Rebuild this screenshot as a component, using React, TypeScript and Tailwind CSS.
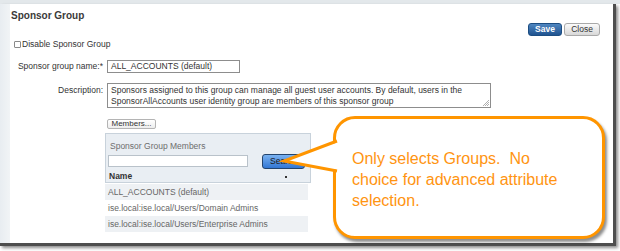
import React from 'react';

const rows = [
  'ALL_ACCOUNTS (default)',
  'ise.local:ise.local/Users/Domain Admins',
  'ise.local:ise.local/Users/Enterprise Admins',
];

const App: React.FC = () => {
  return (
    <div className="relative w-[620px] h-[251px] bg-white overflow-hidden font-['Liberation_Sans',Arial,sans-serif] text-[8.5px] text-[#333]">
      {/* top strip */}
      <div className="h-[4px] bg-[#e3e8eb]" />

      {/* window */}
      <div className="flex w-[616px] h-[242px] border-r-[3px] border-b-[3px] border-[#4e4e4e] shadow-[2px_2px_3px_rgba(0,0,0,0.45)]">
        <div className="w-[10px] bg-gradient-to-r from-[#e8edf1] to-[#f1f4f6]" />

        <div className="flex-1 flex flex-col pt-[6px] pr-[13px]">
          {/* header */}
          <div className="flex justify-between items-start">
            <div className="pl-[1px] text-[10px] leading-[12px] font-bold text-[#3a3a3a]">Sponsor Group</div>
            <div className="mt-[13px] flex gap-[2px]">
              <button className="w-[34px] h-[13px] rounded-[3px] border border-[#1c4d82] bg-gradient-to-b from-[#4f86c0] to-[#1f5390] text-white font-bold text-[8.5px] leading-[11px]">
                Save
              </button>
              <button className="w-[36px] h-[13px] rounded-[3px] border border-[#a9a9a9] bg-gradient-to-b from-[#fbfbfb] to-[#d8d8d8] text-[#333] text-[8.5px] leading-[11px]">
                Close
              </button>
            </div>
          </div>

          {/* checkbox */}
          <div className="mt-[4px] h-[9px] flex items-center pl-[4px]">
            <span className="w-[7px] h-[7px] border border-[#8a8a8a] rounded-[1px] bg-white" />
            <span className="ml-[1px] leading-[9px]">Disable Sponsor Group</span>
          </div>

          {/* name */}
          <div className="mt-[11px] flex items-center">
            <div className="w-[93px] text-right whitespace-nowrap">Sponsor group name:*</div>
            <div className="ml-[4px] w-[133px] h-[13px] border border-[#8d8d8d] bg-white pl-[3px] leading-[11px] whitespace-nowrap">
              ALL_ACCOUNTS (default)
            </div>
          </div>

          {/* description */}
          <div className="mt-[10px] flex items-start">
            <div className="w-[93px] text-right pt-[2px] leading-[10px]">Description:</div>
            <div className="relative ml-[4px] w-[384px] h-[25px] border border-[#8d8d8d] bg-white pl-[3px] pt-[1px] leading-[11px] whitespace-nowrap">
              <div>Sponsors assigned to this group can manage all guest user accounts. By default, users in the</div>
              <div>SponsorAllAccounts user identity group are members of this sponsor group</div>
              <svg className="absolute right-[1px] bottom-[1px]" width="6" height="6" viewBox="0 0 6 6">
                <path d="M0 6L6 0M2 6L6 2M4 6L6 4" stroke="#9a9a9a" strokeWidth="0.8" />
              </svg>
            </div>
          </div>

          {/* members button */}
          <div className="mt-[9px] ml-[97px]">
            <button className="w-[49px] h-[10px] rounded-[2px] border border-[#b4b4b4] bg-gradient-to-b from-white to-[#ededed] text-[8px] leading-[8px] text-[#333]">
              Members...
            </button>
          </div>

          {/* members panel */}
          <div className="mt-[3px] ml-[95px] w-[206px] h-[50px] border border-[#c8d2db] bg-[#e9eef3] pt-[7px] pl-[2px]">
            <div className="leading-[10px] text-[#6d6d6d] pl-[2px]">Sponsor Group Members</div>
            <div className="mt-[3px] h-[15px] flex items-center">
              <div className="w-[140px] h-[12px] border border-[#b9c2ca] bg-white" />
              <button className="ml-[14px] w-[43px] h-[15px] rounded-[3px] border border-[#24456e] bg-gradient-to-b from-[#79b1f0] to-[#3277d4] text-[#1a1a1a] text-[8.5px] leading-[13px]">
                Search
              </button>
            </div>
            <div className="mt-[1px] h-[12px] flex items-center pl-[1px] pr-[23px] justify-between">
              <span className="leading-[12px] font-semibold text-[#333]">Name</span>
              <span className="w-[2px] h-[2px] mt-[3px] bg-[#333]" />
            </div>
          </div>

          {/* rows */}
          <div className="mt-[1px] ml-[95px] w-[203px]">
            {rows.map((r, i) => (
              <div
                key={r}
                className={`h-[16px] leading-[16px] pl-[3px] text-[#666] whitespace-nowrap ${i % 2 === 0 ? 'bg-[#eef1f4]' : 'bg-white'}`}
              >
                {r}
              </div>
            ))}
          </div>
        </div>
      </div>

      {/* callout */}
      <div className="absolute left-[333px] top-[116px] w-[272px] h-[123px] rounded-[22px] border-[3px] border-[#ff9500] bg-white shadow-[2px_3px_3px_rgba(0,0,0,0.45)] pl-[16px] pt-[29px]">
        <div className="text-[16px] leading-[21px] text-[#ff9411] whitespace-pre">
          {'Only selects Groups.  No\nchoice for advanced attribute\nselection.'}
        </div>
      </div>
      <svg className="absolute left-0 top-0 pointer-events-none" width="620" height="251">
        <path d="M338 142 L284 161 L338 170 Z" fill="white" stroke="none" />
        <path d="M337 141 L284 161 L337 171" fill="none" stroke="#ff9500" strokeWidth="3" strokeLinejoin="miter" />
      </svg>
    </div>
  );
};

export default App;
